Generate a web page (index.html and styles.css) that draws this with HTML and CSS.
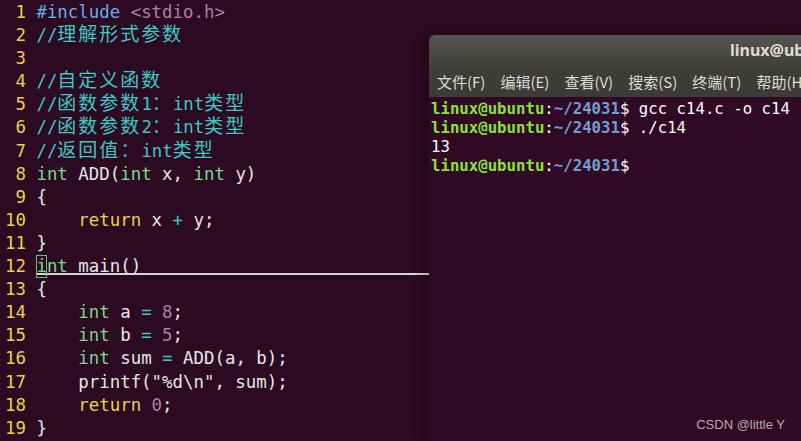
FILE: index.html
```html
<!DOCTYPE html>
<html lang="zh-CN">
<head>
    <meta charset="UTF-8">
    <meta name="viewport" content="width=device-width, initial-scale=1.0">
    <title>c14.c - vim / terminal</title>
    <link rel="stylesheet" href="styles.css">
</head>
<body>
    <div class="screen">
        <div class="editor">
            <div class="line"><span class="num"> 1</span><span class="code"><span class="pre">#include</span> <span class="inc">&lt;stdio.h&gt;</span></span></div>
            <div class="line"><span class="num"> 2</span><span class="code"><span class="cmt">//<span class="wide">理解形式参数</span></span></span></div>
            <div class="line"><span class="num"> 3</span><span class="code"></span></div>
            <div class="line"><span class="num"> 4</span><span class="code"><span class="cmt">//<span class="wide">自定义函数</span></span></span></div>
            <div class="line"><span class="num"> 5</span><span class="code"><span class="cmt">//<span class="wide">函数参数</span>1<span class="wide">：</span>int<span class="wide">类型</span></span></span></div>
            <div class="line"><span class="num"> 6</span><span class="code"><span class="cmt">//<span class="wide">函数参数</span>2<span class="wide">：</span>int<span class="wide">类型</span></span></span></div>
            <div class="line"><span class="num"> 7</span><span class="code"><span class="cmt">//<span class="wide">返回值</span><span class="wide">：</span>int<span class="wide">类型</span></span></span></div>
            <div class="line"><span class="num"> 8</span><span class="code"><span class="type">int</span> ADD(<span class="type">int</span> x, <span class="type">int</span> y)</span></div>
            <div class="line"><span class="num"> 9</span><span class="code">{</span></div>
            <div class="line"><span class="num">10</span><span class="code">    <span class="kw">return</span> x <span class="op">+</span> y;</span></div>
            <div class="line"><span class="num">11</span><span class="code">}</span></div>
            <div class="line"><span class="num">12</span><span class="code cursorline"><span class="type"><span class="cursor">i</span>nt</span> main()</span></div>
            <div class="line"><span class="num">13</span><span class="code">{</span></div>
            <div class="line"><span class="num">14</span><span class="code">    <span class="type">int</span> a <span class="op">=</span> <span class="lit">8</span>;</span></div>
            <div class="line"><span class="num">15</span><span class="code">    <span class="type">int</span> b <span class="op">=</span> <span class="lit">5</span>;</span></div>
            <div class="line"><span class="num">16</span><span class="code">    <span class="type">int</span> sum <span class="op">=</span> ADD(a, b);</span></div>
            <div class="line"><span class="num">17</span><span class="code">    printf("%d\n", sum);</span></div>
            <div class="line"><span class="num">18</span><span class="code">    <span class="kw">return</span> <span class="lit">0</span>;</span></div>
            <div class="line"><span class="num">19</span><span class="code">}</span></div>
        </div>

        <div class="terminal">
            <div class="header">
                <div class="titlebar">linux@ubuntu: ~/24031</div>
                <div class="menubar">
                    <span>文件(F)</span>
                    <span>编辑(E)</span>
                    <span>查看(V)</span>
                    <span>搜索(S)</span>
                    <span>终端(T)</span>
                    <span>帮助(H)</span>
                </div>
            </div>
            <div class="term-body">
                <div class="tline"><span class="user">linux@ubuntu</span>:<span class="path">~/24031</span>$ gcc c14.c -o c14</div>
                <div class="tline"><span class="user">linux@ubuntu</span>:<span class="path">~/24031</span>$ ./c14</div>
                <div class="tline">13</div>
                <div class="tline"><span class="user">linux@ubuntu</span>:<span class="path">~/24031</span>$</div>
            </div>
        </div>

        <div class="watermark">CSDN @little Y</div>
    </div>
</body>
</html>
```

FILE: styles.css
```css
html, body {
    margin: 0;
    height: 100%;
    background: #2c0a22;
    overflow: hidden;
}

.screen {
    position: relative;
    display: flex;
    width: 801px;
    height: 441px;
    overflow: hidden;
}

/* vim side */
.editor {
    flex: 0 0 429px;
    padding-top: 1px;
    font-family: "DejaVu Sans Mono", "Noto Sans CJK SC", monospace;
    font-size: 17.4px;
    line-height: 23.1px;
    color: #e6e6e6;
}

.line {
    display: flex;
    height: 23.1px;
    white-space: pre;
}

.num {
    flex: 0 0 auto;
    padding-left: 5px;
    width: 2ch;
    margin-right: 1ch;
    color: #e9d34b;
}

.code {
    flex: 1;
}

.wide {
    font-size: 19px;
    letter-spacing: 2px;
    line-height: 1;
}

.cmt { color: #3ec7c7; }
.pre { color: #6aaee6; }
.inc { color: #ad7fa8; }
.type { color: #79d98d; }
.kw { color: #e9d34b; }
.op { color: #3ec7c7; }
.lit { color: #ad7fa8; }

.cursorline {
    background: linear-gradient(#d8d4d6, #d8d4d6) no-repeat 0 18px / 100% 2px;
}

.cursor {
    outline: 1px solid #5fc070;
    outline-offset: -1px;
    display: inline-block;
    height: 23px;
    vertical-align: top;
}

/* terminal window */
.terminal {
    flex: 0 0 600px;
    margin-top: 35px;
    background: #300a24;
    border-top-left-radius: 6px;
    box-shadow: -8px 0 10px rgba(0, 0, 0, 0.18);
}

.header {
    height: 62px;
    border-top-left-radius: 6px;
    background: linear-gradient(#57554f, #3e3d39 55%, #3c3b37);
    color: #dfdbd2;
}

.titlebar {
    height: 31px;
    line-height: 31px;
    padding-left: 301px;
    font-family: "Noto Sans", "Noto Sans CJK SC", sans-serif;
    font-weight: bold;
    font-size: 16px;
    white-space: nowrap;
}

.menubar {
    display: flex;
    gap: 15px;
    height: 31px;
    line-height: 31px;
    padding-left: 8px;
    font-family: "Noto Sans CJK SC", "Noto Sans", sans-serif;
    font-size: 15px;
    white-space: nowrap;
}

.term-body {
    padding: 2px 0 0 2px;
    font-family: "DejaVu Sans Mono", monospace;
    font-size: 15.7px;
    line-height: 19px;
    color: #ffffff;
}

.tline {
    height: 19px;
    white-space: pre;
}

.user {
    color: #8ae234;
    font-weight: bold;
}

.path {
    color: #729fcf;
    font-weight: bold;
}

.watermark {
    position: absolute;
    right: 16px;
    bottom: 9px;
    font-family: "Liberation Sans", Arial, sans-serif;
    font-size: 13px;
    color: #b4aab0;
}
```
